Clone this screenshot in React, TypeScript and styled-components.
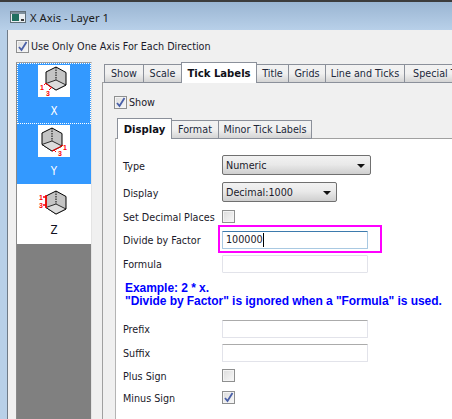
import React from "react";
import styled, { createGlobalStyle } from "styled-components";

const GlobalStyle = createGlobalStyle`
  html, body {
    margin: 0;
    padding: 0;
    background: #b8d0e8;
  }
  body {
    font-family: "DejaVu Sans Condensed", "Liberation Sans", sans-serif;
    font-size: 10.7px;
    color: #1a1a2a;
  }
`;

const Window = styled.div`
  width: 452px;
  height: 419px;
  overflow: hidden;
  display: flex;
  flex-direction: column;
  border-top: 2px solid #3c3c3c;
  box-sizing: border-box;
`;

const TitleBar = styled.div`
  height: 28px;
  flex: none;
  box-sizing: border-box;
  display: flex;
  align-items: center;
  gap: 4px;
  padding: 2px 0 0 10px;
  background: linear-gradient(#9ab5d2, #b8d0e9);
  font-family: "Noto Sans", sans-serif;
  font-size: 11.3px;
  color: #1c1c1c;
`;

const Body = styled.div`
  flex: 1;
  min-height: 0;
  margin-left: 7px;
  border-left: 1px solid #6f7b88;
  background: #f0f0f0;
  display: flex;
  flex-direction: column;
  padding: 9px 0 0 8px;
`;

const CheckRow = styled.label`
  display: flex;
  align-items: center;
  gap: 2px;
  height: 14px;
  flex: none;
`;

const ShowRow = styled(CheckRow)`
  margin-left: -1px;
`;

const Box = styled.span`
  width: 13px;
  height: 13px;
  flex: none;
  box-sizing: border-box;
  border: 1px solid #8e8f8f;
  background: linear-gradient(135deg, #dcdcdc, #f8f8f8);
  box-shadow: inset 0 0 0 1px #f4f4f4;
  display: flex;
  align-items: center;
  justify-content: center;
`;

const Columns = styled.div`
  flex: 1;
  min-height: 0;
  display: flex;
  margin-top: 9px;
`;

const AxisList = styled.div`
  width: 76px;
  flex: none;
  box-sizing: border-box;
  border-top: 1px solid #a0a0a0;
  border-left: 1px solid #8a8a8a;
  border-right: 1px solid #e4e4e4;
  background: #808080;
  display: flex;
  flex-direction: column;
`;

const AxisItem = styled.div<{ $selected?: boolean; $focused?: boolean; $height: number; $pad: number }>`
  height: ${(p) => p.$height}px;
  flex: none;
  box-sizing: border-box;
  display: flex;
  flex-direction: column;
  align-items: center;
  padding-top: ${(p) => p.$pad}px;
  background: ${(p) => (p.$selected ? "#3399ff" : "#ffffff")};
  color: ${(p) => (p.$selected ? "#ffffff" : "#101020")};
  outline: ${(p) => (p.$focused ? "1px dotted #ffffff" : "none")};
  outline-offset: -1px;
`;

const IconBox = styled.div`
  width: 32px;
  height: 32px;
  background: #ffffff;
`;

const AxisName = styled.div<{ $top: number }>`
  margin-top: ${(p) => p.$top}px;
  line-height: 14px;
  font-size: 11.5px;
`;

const Pane = styled.div`
  flex: 1;
  min-width: 0;
  margin-left: 10px;
  display: flex;
  flex-direction: column;
`;

const TabStrip = styled.div<{ $gap?: number }>`
  display: flex;
  align-items: flex-end;
  height: 21px;
  flex: none;
  box-sizing: border-box;
  padding-left: 2px;
  margin-top: ${(p) => p.$gap ?? 0}px;
`;

const Tab = styled.div<{ $active?: boolean; $width: number }>`
  width: ${(p) => p.$width}px;
  height: ${(p) => (p.$active ? 21 : 19)}px;
  flex: none;
  box-sizing: border-box;
  display: flex;
  align-items: center;
  justify-content: center;
  white-space: nowrap;
  border: 1px solid #8b909a;
  border-bottom: ${(p) => (p.$active ? "none" : "1px solid #8b909a")};
  margin-right: -1px;
  background: ${(p) => (p.$active ? "#ffffff" : "linear-gradient(#f2f2f2, #f0f0f0 50%, #d4d4d4)")};
  font-weight: ${(p) => (p.$active ? 700 : 400)};
  font-size: ${(p) => (p.$active ? 11.2 : 10.7)}px;
  color: ${(p) => (p.$active ? "#101018" : "#22283a")};
  position: relative;
  z-index: ${(p) => (p.$active ? 1 : 0)};
`;

const OuterPanel = styled.div`
  flex: 1;
  min-height: 0;
  border-left: 1px solid #a0a0a0;
  border-top: 1px solid #a0a0a0;
  margin-top: -1px;
  display: flex;
  flex-direction: column;
  padding: 12px 0 0 12px;
`;

const InnerPanel = styled.div`
  flex: 1;
  min-height: 0;
  margin-top: -1px;
  background: #ffffff;
  border-left: 1px solid #b4b4b4;
  border-top: 1px solid #a0a0a0;
  padding: 13px 0 0 7px;
`;

const FormRow = styled.div<{ $height: number }>`
  height: ${(p) => p.$height}px;
  display: flex;
  align-items: center;
  position: relative;
`;

const Label = styled.div`
  width: 99px;
  flex: none;
  white-space: nowrap;
  padding-top: 2px;
`;

const Select = styled.div<{ $width: number }>`
  width: ${(p) => p.$width}px;
  height: 20px;
  box-sizing: border-box;
  border: 1px solid #707070;
  border-radius: 2px;
  background: linear-gradient(#f2f2f2, #e9e9e9 48%, #cfcfcf);
  display: flex;
  align-items: center;
  justify-content: space-between;
  padding: 1px 5px 0 3px;
`;

const Arrow = styled.span`
  width: 0;
  height: 0;
  border-left: 4px solid transparent;
  border-right: 4px solid transparent;
  border-top: 4px solid #111;
`;

const TextField = styled.div<{ $active?: boolean }>`
  width: 146px;
  height: 18px;
  box-sizing: border-box;
  border: 1px solid ${(p) => (p.$active ? "#a9c9e2" : "#e2e3ea")};
  border-top-color: ${(p) => (p.$active ? "#3d7bad" : "#ababab")};
  border-radius: 1px;
  background: #fff;
  display: flex;
  align-items: center;
  padding-left: 3px;
`;

const FormulaField = styled(TextField)`
  border-top-color: #e2e3ea;
`;

const Caret = styled.span`
  width: 1px;
  height: 14px;
  background: #000;
`;

const Highlight = styled.div`
  position: absolute;
  left: 95px;
  top: -1px;
  width: 164px;
  height: 28px;
  box-sizing: border-box;
  border: 2px solid #ff00ff;
  pointer-events: none;
`;

const Note = styled.div`
  font-family: "Liberation Sans", sans-serif;
  font-weight: 700;
  font-size: 12px;
  line-height: 13px;
  letter-spacing: -0.05px;
  color: #0000ff;
  white-space: nowrap;
  margin: 8px 0 8px 2px;
`;

const Tick = () => (
  <svg width="11" height="11" viewBox="0 0 11 11">
    <path d="M2 6 L4.5 9 L9.5 1" fill="none" stroke="#4a60a8" strokeWidth="1.8" />
  </svg>
);

const WindowIcon = () => (
  <svg width="16" height="12" viewBox="0 0 16 12">
    <rect x="0.5" y="0.5" width="15" height="11" fill="#e8eef2" stroke="#5f6f78" />
    <rect x="1" y="1" width="14" height="2" fill="#7d8f9c" />
    <rect x="2" y="3" width="7" height="7" fill="#1f6f5f" />
    <rect x="11" y="8" width="3" height="2" fill="#3a3a3a" />
  </svg>
);

type CubeProps = { axis: "x" | "y" | "z" };

// the little axis cube, the red edge moves with the axis
const Cube: React.FC<CubeProps> = ({ axis }) => {
  const shift = axis === "y" ? "translate(-4 1)" : "translate(0 0)";
  return (
    <svg width="32" height="32" viewBox="0 0 32 32" style={{ display: "block" }}>
      <g transform={shift}>
        <path d="M18 2 L28 7.5 V20 L18 25 L8 18.5 V7 Z" fill="#c4c4c4" stroke="#000" strokeWidth="1" />
        <path d="M18 15 L8 18.5 L18 25 L28 20 Z" fill="#dcdcdc" stroke="#000" strokeWidth="0.8" />
        <path d="M18 2 V15" stroke="#000" strokeWidth="1" strokeDasharray="1.5 1" />
        {axis === "x" && <path d="M8 18.5 L14 23 M8 18 L6 20 M13 23 L11 25" stroke="#ff0000" fill="none" />}
        {axis === "y" && <path d="M18 25 L28 20 M27 20.5 L29 19 M20 24 L22 26" stroke="#ff0000" fill="none" />}
        {axis === "z" && <path d="M8 6 V19 M5 8 H8 M5 16 H8" stroke="#ff0000" strokeWidth="1.6" fill="none" />}
      </g>
      <g fill="#ff0000" fontFamily="'Liberation Sans', sans-serif" fontSize="7" fontWeight="700">
        {axis === "x" && <text x="2" y="25">1</text>}
        {axis === "x" && <text x="8" y="31">3</text>}
        {axis === "y" && <text x="25" y="25">1</text>}
        {axis === "y" && <text x="20" y="31">3</text>}
        {axis === "z" && <text x="1" y="11">1</text>}
        {axis === "z" && <text x="1" y="19">3</text>}
      </g>
    </svg>
  );
};

const mainTabs = [
  { name: "Show", width: 40 },
  { name: "Scale", width: 39 },
  { name: "Tick Labels", width: 76, active: true },
  { name: "Title", width: 33 },
  { name: "Grids", width: 38 },
  { name: "Line and Ticks", width: 80 },
  { name: "Special Ticks", width: 80 },
];

const subTabs = [
  { name: "Display", width: 55, active: true },
  { name: "Format", width: 48 },
  { name: "Minor Tick Labels", width: 94 },
];

export default function App() {
  return (
    <>
      <GlobalStyle />
      <Window>
        <TitleBar>
          <WindowIcon />
          X Axis - Layer 1
        </TitleBar>
        <Body>
          <CheckRow>
            <Box>
              <Tick />
            </Box>
            Use Only One Axis For Each Direction
          </CheckRow>
          <Columns>
            <AxisList>
              <AxisItem $selected $focused $height={61} $pad={2}>
                <IconBox>
                  <Cube axis="x" />
                </IconBox>
                <AxisName $top={7}>X</AxisName>
              </AxisItem>
              <AxisItem $selected $height={60} $pad={1}>
                <IconBox>
                  <Cube axis="y" />
                </IconBox>
                <AxisName $top={7}>Y</AxisName>
              </AxisItem>
              <AxisItem $height={60} $pad={5}>
                <IconBox>
                  <Cube axis="z" />
                </IconBox>
                <AxisName $top={2}>Z</AxisName>
              </AxisItem>
            </AxisList>
            <Pane>
              <TabStrip>
                {mainTabs.map((tab) => (
                  <Tab key={tab.name} $active={tab.active} $width={tab.width}>
                    {tab.name}
                  </Tab>
                ))}
              </TabStrip>
              <OuterPanel>
                <ShowRow>
                  <Box>
                    <Tick />
                  </Box>
                  Show
                </ShowRow>
                <TabStrip $gap={9}>
                  {subTabs.map((tab) => (
                    <Tab key={tab.name} $active={tab.active} $width={tab.width}>
                      {tab.name}
                    </Tab>
                  ))}
                </TabStrip>
                <InnerPanel>
                  <FormRow $height={26}>
                    <Label>Type</Label>
                    <Select $width={149}>
                      Numeric
                      <Arrow />
                    </Select>
                  </FormRow>
                  <FormRow $height={28}>
                    <Label>Display</Label>
                    <Select $width={115}>
                      Decimal:1000
                      <Arrow />
                    </Select>
                  </FormRow>
                  <FormRow $height={20}>
                    <Label>Set Decimal Places</Label>
                    <Box />
                  </FormRow>
                  <FormRow $height={27}>
                    <Label>Divide by Factor</Label>
                    <TextField $active>
                      100000
                      <Caret />
                    </TextField>
                    <Highlight />
                  </FormRow>
                  <FormRow $height={21}>
                    <Label>Formula</Label>
                    <FormulaField />
                  </FormRow>
                  <Note>
                    Example: 2 * x.
                    <br />
                    "Divide by Factor" is ignored when a "Formula" is used.
                  </Note>
                  <FormRow $height={25}>
                    <Label>Prefix</Label>
                    <TextField />
                  </FormRow>
                  <FormRow $height={23}>
                    <Label>Suffix</Label>
                    <TextField />
                  </FormRow>
                  <FormRow $height={22}>
                    <Label>Plus Sign</Label>
                    <Box />
                  </FormRow>
                  <FormRow $height={23}>
                    <Label>Minus Sign</Label>
                    <Box>
                      <Tick />
                    </Box>
                  </FormRow>
                </InnerPanel>
              </OuterPanel>
            </Pane>
          </Columns>
        </Body>
      </Window>
    </>
  );
}
